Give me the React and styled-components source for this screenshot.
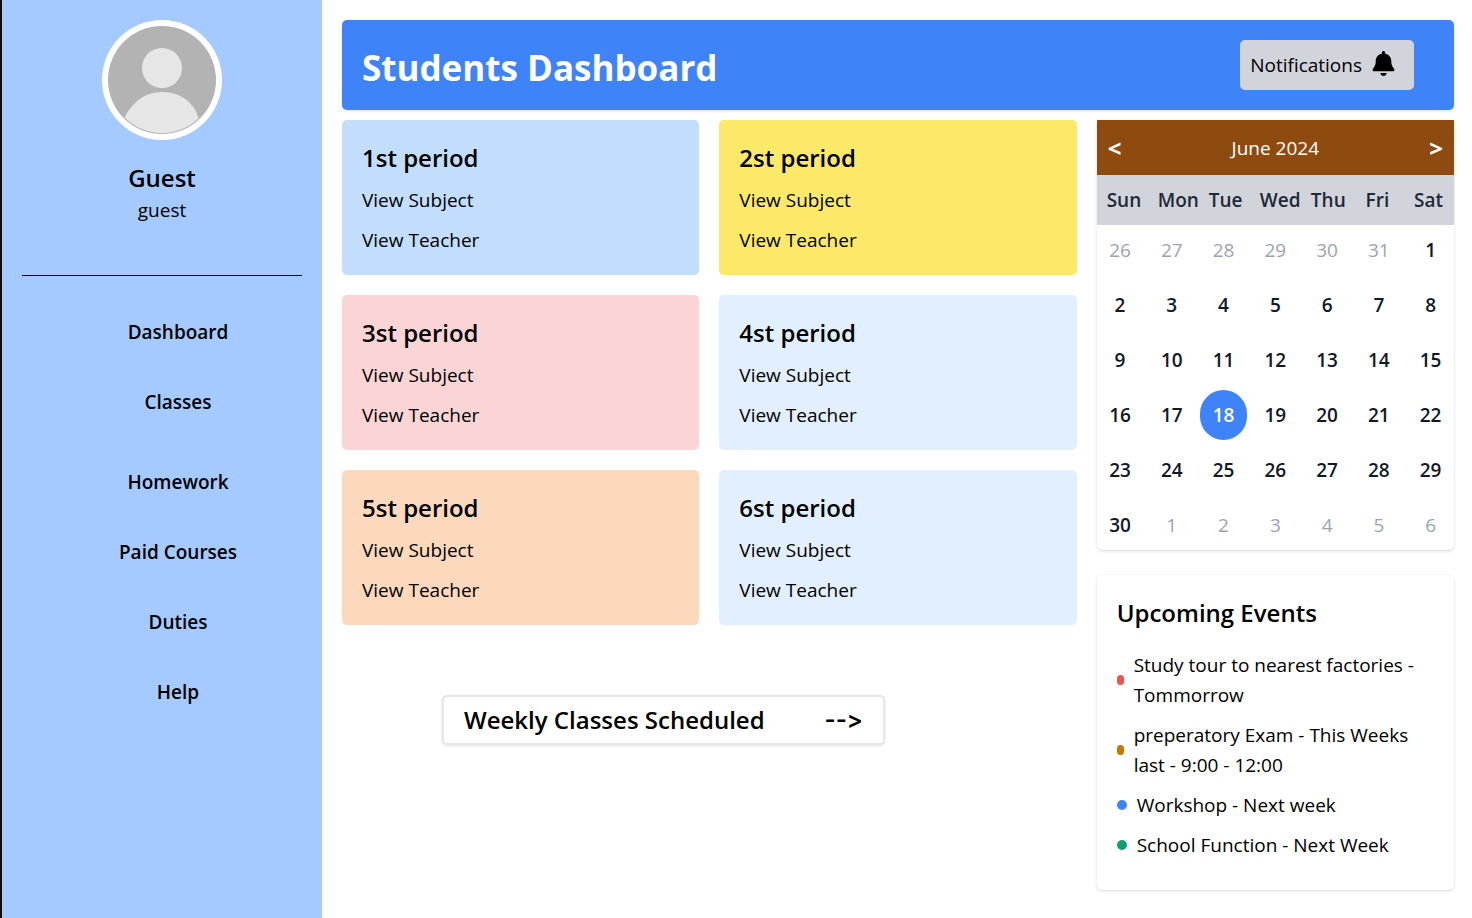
import React from "react";
import styled, { createGlobalStyle } from "styled-components";
import { FaBell } from "react-icons/fa6";

const GlobalStyle = createGlobalStyle`
  *, *::before, *::after { box-sizing: border-box; }
  body {
    margin: 0;
    background: #ffffff;
    color: #000000;
    font-family: "Open Sans", "Noto Sans", sans-serif;
    font-size: 19px;
    line-height: 30px;
  }
  h1, h2, h3, p, ul { margin: 0; padding: 0; }
  ul { list-style: none; }
  a { color: inherit; text-decoration: none; }
  button { font: inherit; color: inherit; border: 0; padding: 0; background: none; cursor: pointer; }
`;

const Page = styled.div`
  display: flex;
  min-height: 100vh;
  border-left: 2px solid #120d0c;
`;

const Sidebar = styled.aside`
  flex: 0 0 320px;
  padding: 20px;
  background: #a5caff;
`;

const Profile = styled.div`
  display: flex;
  flex-direction: column;
  align-items: center;
  padding-bottom: 50px;
  border-bottom: 1px solid #000000;
`;

const Avatar = styled.svg`
  width: 120px;
  height: 120px;
  margin-bottom: 20px;
`;

const Heading = styled.h2`
  font-size: 24px;
  line-height: 35px;
  font-weight: 600;
`;

const Nav = styled.nav`
  display: flex;
  flex-direction: column;
  gap: 40px;
  padding: 41px 0 0 32px;
  text-align: center;
  font-weight: 600;
`;

const NavGroup = styled.div`
  display: flex;
  flex-direction: column;
  align-items: center;
  gap: 40px;
  padding-bottom: 10px;
`;

const Main = styled.main`
  flex: 1;
  min-width: 0;
  display: flex;
  flex-direction: column;
  gap: 10px;
  padding: 20px 18px 20px 20px;
`;

const Header = styled.header`
  display: flex;
  align-items: center;
  justify-content: space-between;
  padding: 20px 40px 20px 20px;
  border-radius: 5px;
  background: #3f83f8;
  box-shadow: 0 1px 3px rgba(0, 0, 0, 0.12);
`;

const Title = styled.h1`
  padding-top: 5px;
  color: #ffffff;
  font-size: 35px;
  line-height: 45px;
  font-weight: 700;
`;

const NotificationButton = styled.button`
  display: flex;
  align-items: center;
  gap: 9px;
  height: 50px;
  padding: 0 18px 0 10px;
  border-radius: 5px;
  background: #d1d5db;

  svg { width: 25px; height: 25px; margin-bottom: 4px; }
`;

const Columns = styled.div`
  display: grid;
  grid-template-columns: repeat(3, minmax(0, 1fr));
  gap: 20px;
  align-items: start;
`;

const Schedule = styled.section`
  grid-column: span 2;
  display: flex;
  flex-direction: column;
  gap: 70px;
`;

const PeriodGrid = styled.div`
  display: grid;
  grid-template-columns: repeat(2, minmax(0, 1fr));
  gap: 20px;
`;

const PeriodCard = styled.article`
  display: flex;
  flex-direction: column;
  align-items: flex-start;
  gap: 10px;
  padding: 20px;
  border-radius: 5px;
  background: ${(p) => p.$color};
`;

const WeeklyButton = styled.button`
  display: flex;
  align-items: center;
  justify-content: space-between;
  width: 443px;
  height: 50px;
  margin-left: 100px;
  padding: 0 20px;
  border: 2px solid #e5e7eb;
  border-radius: 5px;
  background: #ffffff;
  box-shadow: 0 1px 3px rgba(0, 0, 0, 0.12);
  font-size: 24px;
  font-weight: 600;
`;

const Arrow = styled.span`
  font-family: Inter, sans-serif;
  font-feature-settings: "calt" 0;
`;

const Aside = styled.aside`
  display: flex;
  flex-direction: column;
  gap: 25px;
`;

const Card = styled.section`
  overflow: hidden;
  border-radius: 5px;
  background: #ffffff;
  box-shadow: 0 1px 3px rgba(0, 0, 0, 0.16);
`;

const CalendarCard = styled(Card)`
  border-radius: 0 0 5px 5px;
`;

const MonthBar = styled.div`
  display: flex;
  align-items: center;
  justify-content: space-between;
  height: 55px;
  padding: 0 11px;
  background: #8e4b10;
  color: #ffffff;
`;

const MonthArrow = styled.button`
  font-size: 24px;
  font-weight: 700;
`;

const Weekdays = styled.div`
  display: grid;
  grid-template-columns: repeat(7, minmax(0, 1fr));
  background: #d1d5db;
  color: #1f2937;
  font-weight: 600;
`;

const Weekday = styled.div`
  padding: 10px;
  text-align: center;
  white-space: nowrap;
`;

const Days = styled.div`
  display: grid;
  grid-template-columns: repeat(7, minmax(0, 1fr));
  gap: 5px;
`;

const Day = styled.button`
  height: 50px;
  border-radius: 25px;
  background: ${(p) => (p.$today ? "#3f83f8" : "transparent")};
  color: ${(p) => (p.$today ? "#ffffff" : p.$outside ? "#9ca3af" : "#111827")};
  font-weight: ${(p) => (p.$outside ? 400 : 600)};
`;

const EventsCard = styled(Card)`
  padding: 20px;
`;

const EventList = styled.ul`
  padding: 20px 0 10px;
  display: flex;
  flex-direction: column;
  gap: 10px;
`;

const EventItem = styled.li`
  display: flex;
  align-items: center;
  gap: 10px;
`;

const Dot = styled.span`
  flex: none;
  width: ${(p) => (p.$narrow ? 7 : 10)}px;
  height: 10px;
  border-radius: 5px;
  background: ${(p) => p.$color};
`;

const periods = [
  ["1st period", "#c3ddfd"],
  ["2st period", "#fce96a"],
  ["3st period", "#fbd5d5"],
  ["4st period", "#e1effe"],
  ["5st period", "#fcd9bd"],
  ["6st period", "#e1effe"],
];

const days = [
  ...[26, 27, 28, 29, 30, 31].map((n) => ({ n, outside: true })),
  ...Array.from({ length: 30 }, (_, i) => ({ n: i + 1, today: i === 17 })),
  ...[1, 2, 3, 4, 5, 6].map((n) => ({ n, outside: true })),
];

const events = [
  { text: "Study tour to nearest factories - Tommorrow", color: "#f05252", narrow: true },
  { text: "preperatory Exam - This Weeks last - 9:00 - 12:00", color: "#c27803", narrow: true },
  { text: "Workshop - Next week", color: "#3f83f8" },
  { text: "School Function - Next Week", color: "#0e9f6e" },
];

export default function App() {
  return (
    <>
      <GlobalStyle />
      <Page>
        <Sidebar>
          <Profile>
            <Avatar viewBox="0 0 120 120" role="img" aria-label="Guest avatar">
              <defs>
                <clipPath id="face">
                  <circle cx="60" cy="60" r="53" />
                </clipPath>
              </defs>
              <circle cx="60" cy="60" r="60" fill="#ffffff" />
              <circle cx="60" cy="60" r="54" fill="#b3b3b3" />
              <circle cx="60" cy="48" r="20" fill="#e6e6e6" />
              <path
                d="M22 99C29 83 43 72 60 72C79 72 93 83 97 100V120H22Z"
                fill="#e6e6e6"
                clipPath="url(#face)"
              />
            </Avatar>
            <Heading>Guest</Heading>
            <p>guest</p>
          </Profile>
          <Nav aria-label="Main">
            <NavGroup>
              <a href="#dashboard">Dashboard</a>
              <a href="#classes">Classes</a>
            </NavGroup>
            <NavGroup>
              <a href="#homework">Homework</a>
              <a href="#courses">Paid Courses</a>
              <a href="#duties">Duties</a>
              <a href="#help">Help</a>
            </NavGroup>
          </Nav>
        </Sidebar>
        <Main>
          <Header>
            <Title>Students Dashboard</Title>
            <NotificationButton type="button">
              Notifications
              <FaBell aria-hidden="true" />
            </NotificationButton>
          </Header>
          <Columns>
            <Schedule>
              <PeriodGrid>
                {periods.map(([name, color]) => (
                  <PeriodCard key={name} $color={color}>
                    <Heading as="h3">{name}</Heading>
                    <a href="#subject">View Subject</a>
                    <a href="#teacher">View Teacher</a>
                  </PeriodCard>
                ))}
              </PeriodGrid>
              <WeeklyButton type="button">
                <span>Weekly Classes Scheduled</span>
                <Arrow>--&gt;</Arrow>
              </WeeklyButton>
            </Schedule>
            <Aside>
              <CalendarCard aria-label="Calendar">
                <MonthBar>
                  <MonthArrow type="button" aria-label="Previous month">&lt;</MonthArrow>
                  <span>June 2024</span>
                  <MonthArrow type="button" aria-label="Next month">&gt;</MonthArrow>
                </MonthBar>
                <Weekdays>
                  {["Sun", "Mon", "Tue", "Wed", "Thu", "Fri", "Sat"].map((d) => (
                    <Weekday key={d}>{d}</Weekday>
                  ))}
                </Weekdays>
                <Days>
                  {days.map((d, i) => (
                    <Day key={i} type="button" $today={d.today} $outside={d.outside}>
                      {d.n}
                    </Day>
                  ))}
                </Days>
              </CalendarCard>
              <EventsCard>
                <Heading>Upcoming Events</Heading>
                <EventList>
                  {events.map((e) => (
                    <EventItem key={e.text}>
                      <Dot $color={e.color} $narrow={e.narrow} />
                      <span>{e.text}</span>
                    </EventItem>
                  ))}
                </EventList>
              </EventsCard>
            </Aside>
          </Columns>
        </Main>
      </Page>
    </>
  );
}
